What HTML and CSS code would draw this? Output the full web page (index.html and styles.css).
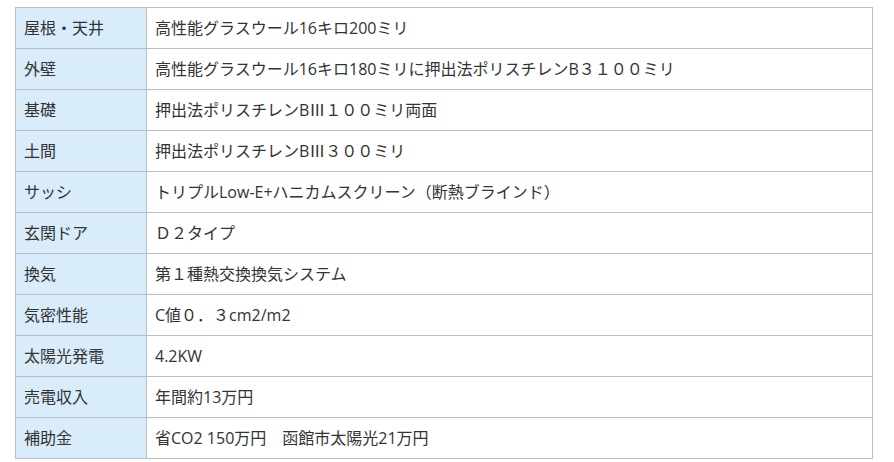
FILE: index.html
```html
<!DOCTYPE html>
<html lang="ja">
<head>
<meta charset="utf-8">
<link rel="stylesheet" href="styles.css">
</head>
<body>
<table class="spec">
  <tr><th>屋根・天井</th><td>高性能グラスウール16キロ200ミリ</td></tr>
  <tr><th>外壁</th><td>高性能グラスウール16キロ180ミリに押出法ポリスチレンB３１００ミリ</td></tr>
  <tr><th>基礎</th><td>押出法ポリスチレンBⅢ１００ミリ両面</td></tr>
  <tr><th>土間</th><td>押出法ポリスチレンBⅢ３００ミリ</td></tr>
  <tr><th>サッシ</th><td>トリプルLow-E+ハニカムスクリーン（断熱ブラインド）</td></tr>
  <tr><th>玄関ドア</th><td>Ｄ２タイプ</td></tr>
  <tr><th>換気</th><td>第１種熱交換換気システム</td></tr>
  <tr><th>気密性能</th><td>C値０．３cm2/m2</td></tr>
  <tr><th>太陽光発電</th><td>4.2KW</td></tr>
  <tr><th>売電収入</th><td>年間約13万円</td></tr>
  <tr><th>補助金</th><td>省CO2 150万円　函館市太陽光21万円</td></tr>
</table>
</body>
</html>
```
FILE: styles.css
```css
html, body {
  margin: 0;
  padding: 0;
  background: #fff;
}
body {
  padding: 7px 0 0 15px;
  font-family: "Open Sans", "Noto Sans CJK JP", sans-serif;
  font-size: 16px;
  color: #333;
}
.spec {
  border-collapse: collapse;
  width: 858px;
}
.spec th, .spec td {
  border: 1px solid #bdbdbd;
  height: 40px;
  padding: 0 0 0 8px;
  text-align: left;
  font-weight: normal;
  vertical-align: middle;
  line-height: 20px;
}
.spec th {
  width: 122px;
  background: #d8ecfa;
}
```
